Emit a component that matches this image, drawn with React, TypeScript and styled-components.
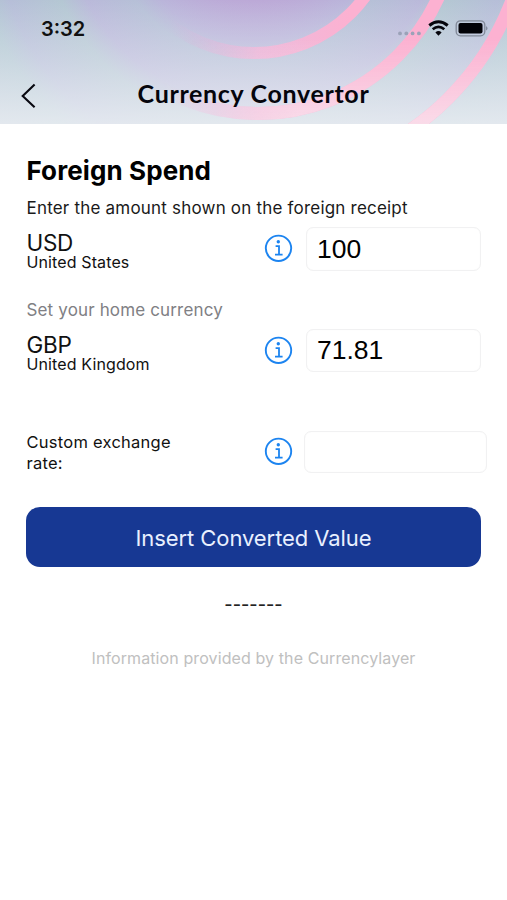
import React from "react";
import styled, { createGlobalStyle } from "styled-components";

const GlobalStyle = createGlobalStyle`
  * { box-sizing: border-box; }
  body {
    margin: 0;
    background: #fff;
    color: #111;
    font-family: Inter, "Liberation Sans", sans-serif;
  }
`;

const Screen = styled.div`
  width: 507px;
  height: 900px;
  overflow: hidden;
  background: #fff;
`;

const Header = styled.header`
  position: relative;
  height: 124px;
  display: flex;
  flex-direction: column;
`;

const Backdrop = styled.svg`
  position: absolute;
  inset: 0;
`;

const StatusBar = styled.div`
  position: relative;
  height: 58px;
  padding: 0 18px 0 41px;
  display: flex;
  align-items: center;
  justify-content: space-between;
`;

const Clock = styled.span`
  font-size: 20px;
  font-weight: 600;
  line-height: 24px;
`;

const NavBar = styled.div`
  position: relative;
  height: 66px;
  padding: 0 20px;
  display: grid;
  grid-template-columns: 40px 1fr 40px;
  align-items: start;
`;

const BackButton = styled.button`
  border: 0;
  padding: 25px 0 0;
  background: none;
  display: flex;
`;

const Title = styled.h1`
  margin: 0;
  padding-top: 20px;
  text-align: center;
  font-family: Lato, sans-serif;
  font-size: 25px;
  font-weight: 700;
  line-height: 30px;
  letter-spacing: 0.67px;
  white-space: nowrap;
  color: #05050c;
`;

const Content = styled.main`
  padding: 30px 26px 0;
  display: flex;
  flex-direction: column;
`;

const Heading = styled.h2`
  margin: 0;
  padding-left: 0.5px;
  font-size: 26px;
  font-weight: 700;
  line-height: 34px;
  letter-spacing: 0.1px;
  color: #000;
`;

const Hint = styled.p<{ $muted?: boolean }>`
  margin: 0;
  height: 39px;
  padding: 9px 0 0 0.5px;
  font-size: 17px;
  line-height: 22px;
  letter-spacing: ${(p) => (p.$muted ? 0.15 : 0.2)}px;
  color: ${(p) => (p.$muted ? "#808084" : "#1a1a1a")};
`;

const Row = styled.div<{ $height: number; $wide?: boolean }>`
  height: ${(p) => p.$height}px;
  margin-right: ${(p) => (p.$wide ? -6 : 0)}px;
  display: grid;
  grid-template-columns: 238px ${(p) => (p.$wide ? "40px" : "42px")} 1fr;
  align-items: start;
`;

const Currency = styled.div`
  padding: 4px 0 0 0.5px;
  display: flex;
  flex-direction: column;
`;

const Code = styled.span`
  font-size: 22.5px;
  line-height: 23px;
  letter-spacing: -0.3px;
`;

const Country = styled.span`
  font-size: 16px;
  line-height: 17px;
  letter-spacing: 0.12px;
`;

const RateLabel = styled.label`
  width: 180px;
  padding: 1px 0 0 0.5px;
  font-size: 16.5px;
  line-height: 21px;
  letter-spacing: 0.25px;
`;

const InfoButton = styled.button<{ $top?: number }>`
  border: 0;
  padding: ${(p) => p.$top ?? 7}px 0 0;
  background: none;
  display: flex;
`;

const Field = styled.input<{ $height: number }>`
  width: 100%;
  min-width: 0;
  height: ${(p) => p.$height}px;
  padding: 0 8px 0 10px;
  border: 1.5px solid #f1f1f2;
  border-radius: 7px;
  background: #fff;
  color: #000;
  outline: none;
  box-shadow: inset 0 0 1px #f1f1f2;
  font-family: "Liberation Sans", sans-serif;
  font-size: 26.5px;
`;

const PrimaryButton = styled.button`
  height: 60px;
  padding: 2px 0 0;
  border: 0;
  border-radius: 14px;
  background: #173893;
  color: #e9f0ff;
  font-family: inherit;
  font-size: 22px;
  letter-spacing: -0.08px;
`;

const Dashes = styled.div`
  margin-top: 26px;
  text-align: center;
  font-size: 18px;
  font-weight: 500;
  line-height: 24px;
  color: #222;
`;

const Credit = styled.footer`
  margin-top: 30px;
  text-align: center;
  font-size: 16px;
  line-height: 22px;
  letter-spacing: 0.1px;
  color: #c0c0c0;
`;

const InfoIcon = () => (
  <svg width="29" height="29" viewBox="0 0 29 29" fill="none" stroke="#1c84f0">
    <circle cx="14.5" cy="14.3" r="12.7" strokeWidth="1.9" />
    <circle cx="14.3" cy="7.7" r="1.7" fill="#1c84f0" stroke="none" />
    <path d="M11.6 12.2h3.4v8.3M11 20.7h7.6" strokeWidth="1.8" />
  </svg>
);

const RINGS = [
  { cx: 254, cy: -84.5, r: 137.5, strokeWidth: 12 },
  { cx: 258, cy: -84.5, r: 198, strokeWidth: 13 },
  { cx: 254, cy: -97, r: 275.5, strokeWidth: 12.5 },
];

const HeaderBackdrop = () => (
  <Backdrop width="507" height="124" viewBox="0 0 507 124">
    <defs>
      <radialGradient id="bands" gradientUnits="userSpaceOnUse" cx="254" cy="-84.5" r="340">
        <stop offset="0.25" stopColor="#bca9d7" />
        <stop offset="0.37" stopColor="#bab5da" />
        <stop offset="0.43" stopColor="#b6c0d7" />
        <stop offset="0.55" stopColor="#bab9da" />
        <stop offset="0.62" stopColor="#b4c7d3" />
        <stop offset="0.76" stopColor="#b6bed8" />
        <stop offset="0.83" stopColor="#b1c8d2" />
        <stop offset="1" stopColor="#b7c6d4" />
      </radialGradient>
      <linearGradient id="veil" x1="0" y1="0" x2="0" y2="1">
        <stop offset="0" stopColor="#eef0f6" stopOpacity="0" />
        <stop offset="0.5" stopColor="#ebedf4" stopOpacity="0.42" />
        <stop offset="1" stopColor="#e9edf2" stopOpacity="0.88" />
      </linearGradient>
      <linearGradient id="ring" gradientUnits="userSpaceOnUse" x1="170" y1="0" x2="350" y2="0">
        <stop offset="0" stopColor="#d9b4dd" stopOpacity="0" />
        <stop offset="0.5" stopColor="#f4b8da" stopOpacity="0.85" />
        <stop offset="1" stopColor="#fcb1d1" />
      </linearGradient>
      <linearGradient id="ringVeil" x1="0" y1="0" x2="0" y2="1">
        <stop offset="0.3" stopColor="#fae0ec" stopOpacity="0" />
        <stop offset="1" stopColor="#f9e1ec" stopOpacity="0.88" />
      </linearGradient>
      <linearGradient id="fade" gradientUnits="userSpaceOnUse" x1="160" y1="0" x2="300" y2="0">
        <stop offset="0" stopColor="#000" />
        <stop offset="1" stopColor="#fff" />
      </linearGradient>
      <mask id="ringMask" maskUnits="userSpaceOnUse" x="0" y="0" width="507" height="124">
        {RINGS.map((ring) => (
          <circle key={ring.r} {...ring} fill="none" stroke="url(#fade)" />
        ))}
      </mask>
    </defs>
    <rect width="507" height="124" fill="url(#bands)" />
    <rect width="507" height="124" fill="url(#veil)" />
    {RINGS.map((ring) => (
      <circle key={ring.r} {...ring} fill="none" stroke="url(#ring)" />
    ))}
    <rect width="507" height="124" fill="url(#ringVeil)" mask="url(#ringMask)" />
  </Backdrop>
);

const StatusIcons = () => (
  <svg width="92" height="24" viewBox="0 0 92 24">
    <g fill="#9ba2b8">
      {[3, 9.3, 15.6, 21.9].map((x) => (
        <circle key={x} cx={x} cy="16.4" r="1.9" />
      ))}
    </g>
    <g fill="none" stroke="#05050c">
      <path d="M32.3 8.5Q41.5 1 50.7 8.5" strokeWidth="3" />
      <path d="M35.7 12.3Q41.5 7.5 47.3 12.3" strokeWidth="2.7" />
    </g>
    <path d="M38.4 15.4Q41.5 12.8 44.6 15.4L41.5 18.7Z" fill="#05050c" />
    <rect x="59.2" y="3.8" width="28.6" height="15" rx="4.3" fill="none" stroke="#818998" strokeWidth="1.3" />
    <rect x="61.5" y="6.1" width="24" height="10.4" rx="2" fill="#020207" />
    <path d="M89.2 9q2.6 2.3 0 4.6z" fill="#777f90" />
  </svg>
);

export default function App() {
  return (
    <>
      <GlobalStyle />
      <Screen>
        <Header>
          <HeaderBackdrop />
          <StatusBar>
            <Clock>3:32</Clock>
            <StatusIcons />
          </StatusBar>
          <NavBar>
            <BackButton aria-label="Back">
              <svg width="18" height="26" viewBox="0 0 18 26" fill="none" stroke="#080810" strokeWidth="2.1">
                <path d="M14.6 1.6L2.7 13L14.6 24.3" />
              </svg>
            </BackButton>
            <Title>Currency Convertor</Title>
          </NavBar>
        </Header>
        <Content>
          <Heading>Foreign Spend</Heading>
          <Hint>Enter the amount shown on the foreign receipt</Hint>
          <Row $height={63}>
            <Currency>
              <Code>USD</Code>
              <Country>United States</Country>
            </Currency>
            <InfoButton aria-label="Foreign currency info"><InfoIcon /></InfoButton>
            <Field $height={44} aria-label="Foreign amount" defaultValue="100" />
          </Row>
          <Hint $muted>Set your home currency</Hint>
          <Row $height={102}>
            <Currency>
              <Code>GBP</Code>
              <Country>United Kingdom</Country>
            </Currency>
            <InfoButton aria-label="Home currency info"><InfoIcon /></InfoButton>
            <Field $height={43} aria-label="Home amount" defaultValue="71.81" />
          </Row>
          <Row $height={76} $wide>
            <RateLabel htmlFor="rate">Custom exchange rate:</RateLabel>
            <InfoButton $top={6} aria-label="Exchange rate info"><InfoIcon /></InfoButton>
            <Field $height={42} id="rate" />
          </Row>
          <PrimaryButton>Insert Converted Value</PrimaryButton>
          <Dashes>-------</Dashes>
          <Credit>Information provided by the Currencylayer</Credit>
        </Content>
      </Screen>
    </>
  );
}
